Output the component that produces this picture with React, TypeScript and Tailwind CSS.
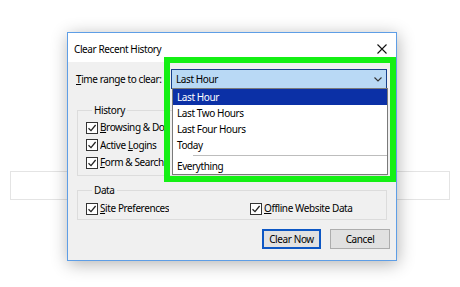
import type { ReactNode } from 'react';

const font = { fontFamily: '"Noto Sans", "Open Sans", sans-serif' };

function Check({ children, className = '' }: { children: ReactNode; className?: string }) {
  return (
    <label className={`flex h-[17.5px] items-center gap-[2px] whitespace-nowrap ${className}`}>
      <span className="flex h-[12px] w-[12px] shrink-0 items-center justify-center border border-[#333] bg-white">
        <svg width="10" height="10" viewBox="0 0 10 10" fill="none">
          <path d="M1.5 5.2 L4 7.6 L8.6 2" stroke="#222" strokeWidth="1.3" />
        </svg>
      </span>
      <span className="overflow-hidden">{children}</span>
    </label>
  );
}

const options = ['Last Hour', 'Last Two Hours', 'Last Four Hours', 'Today'];

export default function App() {
  return (
    <div
      className="relative h-[287px] w-[460px] overflow-hidden bg-white text-[10px] tracking-[-0.4px] text-[#000]"
      style={font}
    >
      {/* page field behind the dialog */}
      <div className="absolute left-[10px] top-[171px] h-[29px] w-[440px] border border-[#e4e4e4]" />

      {/* dialog window */}
      <div className="absolute left-[67px] top-[32px] flex w-[330px] flex-col border border-[#5e9ee6] bg-[#f0f0f0] shadow-[1px_3px_16px_rgba(0,0,0,0.3)]">
        <div className="flex h-[29px] items-center justify-between bg-white pl-[6px] pr-[9px] pt-[3px]">
          <span>Clear Recent History</span>
          <svg width="10" height="10" viewBox="0 0 10 10">
            <path d="M0.5 0.5 L9.5 9.5 M9.5 0.5 L0.5 9.5" stroke="#111" strokeWidth="1.1" />
          </svg>
        </div>

        <div className="flex flex-col px-[9px] pb-[11px] pt-[7px]">
          <div className="flex h-[20px] items-center">
            <span className="-ml-px w-[96px]">
              <u>T</u>ime range to clear:
            </span>
            <div className="flex h-[20px] w-[216px] shrink-0 items-center justify-between border border-[#163f8c] bg-[#b9d9f5] pl-[4px] pr-[4px]">
              <span>Last Hour</span>
              <svg width="8" height="5" viewBox="0 0 8 5" fill="none">
                <path d="M0.5 0.5 L4 4 L7.5 0.5" stroke="#333" strokeWidth="1.1" />
              </svg>
            </div>
          </div>

          <fieldset className="mt-[14px] h-[73px] border border-[#dcdcdc] px-[8px]">
            <legend className="ml-[6px] px-[2px] leading-[15px]">History</legend>
            <div className="flex w-[78px] flex-col pt-[1px]">
              <Check>
                <u>B</u>rowsing &amp; Download History
              </Check>
              <Check>
                Active <u>L</u>ogins
              </Check>
              <Check>
                <u>F</u>orm &amp; Search History
              </Check>
            </div>
          </fieldset>

          <fieldset className="mt-[7px] h-[37px] border border-[#dcdcdc] px-[8px]">
            <legend className="ml-[6px] px-[2px] leading-[15px]">Data</legend>
            <div className="flex pt-[2px]">
              <Check className="w-[164px]">
                <u>S</u>ite Preferences
              </Check>
              <Check>
                <u>O</u>ffline Website Data
              </Check>
            </div>
          </fieldset>

          <div className="-mr-[3px] mt-[9px] flex justify-end gap-[9px]">
            <button className="h-[20px] w-[59px] border-2 border-[#0d57c4] bg-[#e1e1e1]">
              Clear Now
            </button>
            <button className="h-[20px] w-[60px] border border-[#adadad] bg-[#e1e1e1]">
              Cancel
            </button>
          </div>
        </div>
      </div>

      {/* open dropdown list */}
      <div className="absolute left-[172px] top-[88px] flex h-[87px] w-[216px] flex-col border border-[#7a7a7a] bg-white">
        {options.map((o, i) => (
          <div
            key={o}
            className={`flex h-[16px] shrink-0 items-center pl-[4px] ${
              i === 0 ? 'bg-[#0b30a6] text-white' : ''
            }`}
          >
            {o}
          </div>
        ))}
        <div className="flex h-[5px] shrink-0 items-center pl-[20px]">
          <div className="h-px w-full bg-[#bdbdbd]" />
        </div>
        <div className="flex h-[16px] shrink-0 items-center pl-[4px]">Everything</div>
      </div>

      {/* highlight annotation */}
      <div className="absolute left-[164px] top-[57px] h-[125px] w-[232px] border-[6px] border-[#14f014]" />
    </div>
  );
}
